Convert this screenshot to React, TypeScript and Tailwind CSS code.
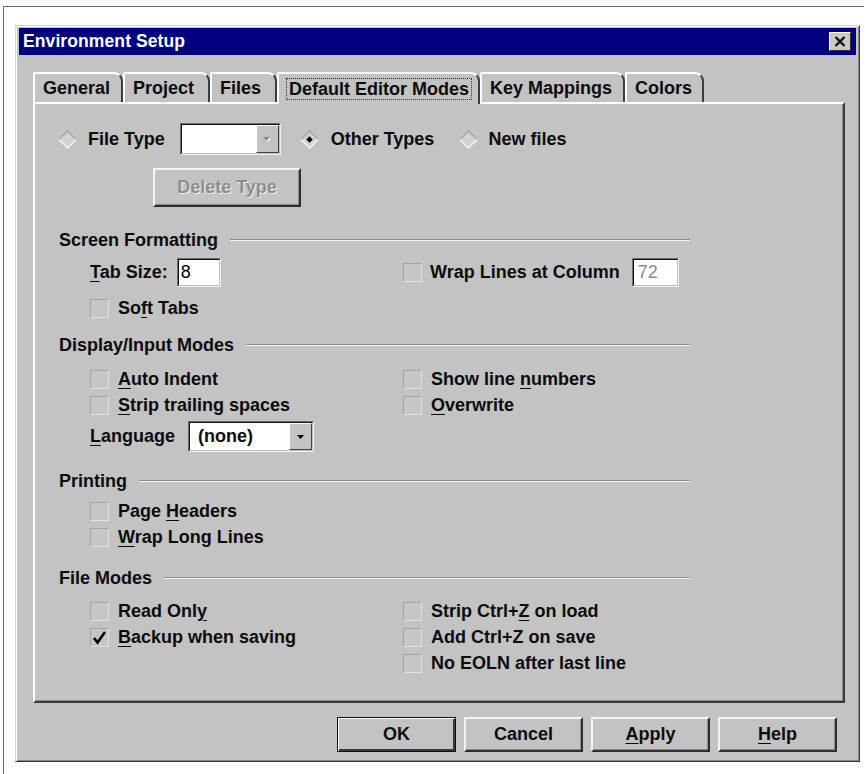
import React from 'react';

const FONT = "font-['Liberation_Sans',Arial,sans-serif]";

const Box: React.FC<{ checked?: boolean }> = ({ checked }) => (
  <span className="w-[19px] h-[19px] shrink-0 flex items-center justify-center bg-[#c6c6c6] border border-t-[#a4a4a4] border-l-[#a4a4a4] border-r-[#e2e2e2] border-b-[#e2e2e2]">
    {checked && (
      <svg width="15" height="15" viewBox="0 0 15 15">
        <path d="M2 8 L5.5 12.5 L13 2" fill="none" stroke="#000" strokeWidth="2.6" />
      </svg>
    )}
  </span>
);

const Radio: React.FC<{ on?: boolean }> = ({ on }) => (
  <svg width="19" height="19" viewBox="0 0 19 19" className="shrink-0">
    <polygon points="9.5,0.8 18.2,9.5 9.5,18.2 0.8,9.5" fill="#d2d2d2" />
    <polyline points="1,9.5 9.5,1 18,9.5" fill="none" stroke="#a8a8a8" strokeWidth="1.6" />
    <polyline points="1,9.5 9.5,18 18,9.5" fill="none" stroke="#f2f2f2" strokeWidth="1.6" />
    {on && <polygon points="9.5,6.3 12.7,9.5 9.5,12.7 6.3,9.5" fill="#000" />}
  </svg>
);

const U: React.FC<{ children: React.ReactNode }> = ({ children }) => (
  <span className="underline underline-offset-[3px] decoration-1">{children}</span>
);

const Check: React.FC<{ checked?: boolean; children: React.ReactNode }> = ({ checked, children }) => (
  <div className="flex items-center gap-[9px] h-[26px]">
    <Box checked={checked} />
    <span>{children}</span>
  </div>
);

const Section: React.FC<{ title: string }> = ({ title }) => (
  <div className="flex items-center h-[24px] ml-[24px] w-[631px]">
    <span className="whitespace-nowrap">{title}</span>
    <div className="flex-1 ml-[12px] border-t border-t-[#8a8a8a] border-b border-b-[#f4f4f4]" />
  </div>
);

const DropBtn: React.FC<{ disabled?: boolean }> = ({ disabled }) => (
  <span className="w-[23px] h-full flex items-center justify-center bg-[#c3c3c3] border border-t-white border-l-white border-r-[#404040] border-b-[#404040]">
    <svg width="10" height="6" viewBox="0 0 10 6">
      {disabled && <polygon points="2,2 9,2 5.5,6" fill="#fff" />}
      <polygon points="1,1 8,1 4.5,5" fill={disabled ? '#8a8a8a' : '#000'} />
    </svg>
  </span>
);

const Field: React.FC<{ w: string; children?: React.ReactNode }> = ({ w, children }) => (
  <div className={`${w} h-full bg-white border border-t-[#6e6e6e] border-l-[#6e6e6e] border-r-[#f2f2f2] border-b-[#f2f2f2]`}>
    <div className="h-full flex items-center border border-t-[#111] border-l-[#111] border-r-[#bdbdbd] border-b-[#bdbdbd]">
      {children}
    </div>
  </div>
);

const Tab: React.FC<{ w: string; label: string; active?: boolean }> = ({ w, label, active }) => (
  <div
    className={`${w} flex items-center pl-[8px] border-t-2 border-l-2 border-r-2 border-t-white border-l-white border-r-[#3c3c3c] rounded-tr-[9px] rounded-tl-[2px] bg-[#c3c3c3] ${
      active ? 'h-[32px] -mb-[2px] relative z-10' : 'h-[30px]'
    }`}
  >
    {active ? (
      <span className="outline-1 outline-dotted outline-[#333] px-[2px] leading-[20px]">{label}</span>
    ) : (
      <span>{label}</span>
    )}
  </div>
);

const Button: React.FC<{ children: React.ReactNode; primary?: boolean }> = ({ children, primary }) => (
  <div
    className={`w-[119px] h-[35px] flex items-center justify-center bg-[#c3c3c3] ${
      primary
        ? 'border border-[#111] shadow-[inset_1px_1px_0_#fff,inset_-2px_-2px_0_#3a3a3a]'
        : 'border-2 border-t-[#f4f4f4] border-l-[#f4f4f4] border-r-[#2e2e2e] border-b-[#2e2e2e] shadow-[inset_-1px_-1px_0_#8a8a8a]'
    }`}
  >
    {children}
  </div>
);

export default function App() {
  return (
    <div className={`w-[865px] h-[774px] bg-white overflow-hidden pt-[6px] pl-[3px] ${FONT} text-[18px] font-bold text-[#0c0c0c]`}>
      <div className="w-[861px] h-[800px] border-t border-l border-[#6b6b6b] pt-[18px] pl-[11px]">
        {/* dialog */}
        <div className="w-[845px] h-[737px] bg-[#c3c3c3] border border-t-[#d6d6d6] border-l-[#d6d6d6] border-r-[#3a3a3a] border-b-[#3a3a3a] shadow-[inset_1px_1px_0_#fff,inset_-1px_-1px_0_#858585] pt-[2px] px-[3px]">
          <div className="h-[27px] bg-[#000080] flex items-center justify-between pl-[4px] pr-[5px]">
            <span className="text-white text-[17.5px] tracking-[0.1px]">Environment Setup</span>
            <span className="w-[22px] h-[19px] bg-[#c9c9c9] border border-t-white border-l-white border-r-[#333] border-b-[#333] flex items-center justify-center">
              <svg width="12" height="11" viewBox="0 0 12 11">
                <path d="M1.5 1 L10.5 10 M10.5 1 L1.5 10" stroke="#111" strokeWidth="2.4" />
              </svg>
            </span>
          </div>

          <div className="ml-[14px] mt-[17px]">
            <div className="flex items-end h-[30px]">
              <Tab w="w-[90px]" label="General" />
              <Tab w="w-[87px]" label="Project" />
              <Tab w="w-[67px]" label="Files" />
              <Tab w="w-[203px]" label="Default Editor Modes" active />
              <Tab w="w-[145px]" label="Key Mappings" />
              <Tab w="w-[79px]" label="Colors" />
            </div>

            {/* panel */}
            <div className="w-[812px] h-[601px] border-2 border-t-white border-l-white border-r-[#3a3a3a] border-b-[#3a3a3a] shadow-[inset_-1px_-1px_0_#8a8a8a] pt-[19px]">
              <div className="flex items-center h-[32px] ml-[23px]">
                <Radio />
                <span className="ml-[11px]">File Type</span>
                <div className="ml-[15px] h-full flex">
                  <Field w="w-[101px]">
                    <div className="flex-1" />
                    <DropBtn disabled />
                  </Field>
                </div>
                <span className="ml-[19px] flex"><Radio on /></span>
                <span className="ml-[12px]">Other Types</span>
                <span className="ml-[25px] flex"><Radio /></span>
                <span className="ml-[10px]">New files</span>
              </div>

              <div className="ml-[118px] mt-[13px] w-[148px] h-[39px] flex items-center justify-center bg-[#c3c3c3] border-2 border-t-[#f4f4f4] border-l-[#f4f4f4] border-r-[#2e2e2e] border-b-[#2e2e2e] shadow-[inset_-1px_-1px_0_#8a8a8a]">
                <span className="text-[#8d8d8d] [text-shadow:1px_1px_0_#f2f2f2]">Delete Type</span>
              </div>

              <div className="mt-[21px]">
                <Section title="Screen Formatting" />
              </div>
              <div className="ml-[55px] mt-[6px] grid grid-cols-[313px_auto]">
                <div className="flex items-center h-[29px]">
                  <span><U>T</U>ab Size:</span>
                  <div className="ml-[9px] h-full flex">
                    <Field w="w-[44px]">
                      <span className="pl-[2px] font-normal text-black">8</span>
                    </Field>
                  </div>
                </div>
                <div className="flex items-center h-[29px]">
                  <Box />
                  <span className="ml-[8px]">Wrap Lines at Column</span>
                  <div className="ml-[12px] h-full flex">
                    <Field w="w-[47px]">
                      <span className="pl-[4px] font-normal text-[#8a8a8a]">72</span>
                    </Field>
                  </div>
                </div>
                <div className="mt-[8px]">
                  <Check>So<U>f</U>t Tabs</Check>
                </div>
              </div>

              <div className="mt-[12px]">
                <Section title="Display/Input Modes" />
              </div>
              <div className="ml-[55px] mt-[9px] grid grid-cols-[313px_auto]">
                <div>
                  <Check><U>A</U>uto Indent</Check>
                  <Check><U>S</U>trip trailing spaces</Check>
                  <div className="flex items-center h-[31px] mt-[3px]">
                    <span><U>L</U>anguage</span>
                    <div className="ml-[13px] h-full flex">
                      <Field w="w-[126px]">
                        <span className="flex-1 pl-[8px]">(none)</span>
                        <DropBtn />
                      </Field>
                    </div>
                  </div>
                </div>
                <div>
                  <Check>Show line <U>n</U>umbers</Check>
                  <Check><U>O</U>verwrite</Check>
                </div>
              </div>

              <div className="mt-[17px]">
                <Section title="Printing" />
              </div>
              <div className="ml-[55px] mt-[5px]">
                <Check>Page <U>H</U>eaders</Check>
                <Check><U>W</U>rap Long Lines</Check>
              </div>

              <div className="mt-[16px]">
                <Section title="File Modes" />
              </div>
              <div className="ml-[55px] mt-[8px] grid grid-cols-[313px_auto]">
                <div>
                  <Check>Read Onl<U>y</U></Check>
                  <Check checked><U>B</U>ackup when saving</Check>
                </div>
                <div>
                  <Check>Strip Ctrl+<U>Z</U> on load</Check>
                  <Check>Add Ctrl+Z on save</Check>
                  <Check>No EOLN after last line</Check>
                </div>
              </div>
            </div>
          </div>

          {/* buttons */}
          <div className="mt-[14px] flex justify-end gap-[8px] pr-[19px]">
            <Button primary>OK</Button>
            <Button>Cancel</Button>
            <Button><U>A</U>pply</Button>
            <Button><U>H</U>elp</Button>
          </div>
        </div>
      </div>
    </div>
  );
}
